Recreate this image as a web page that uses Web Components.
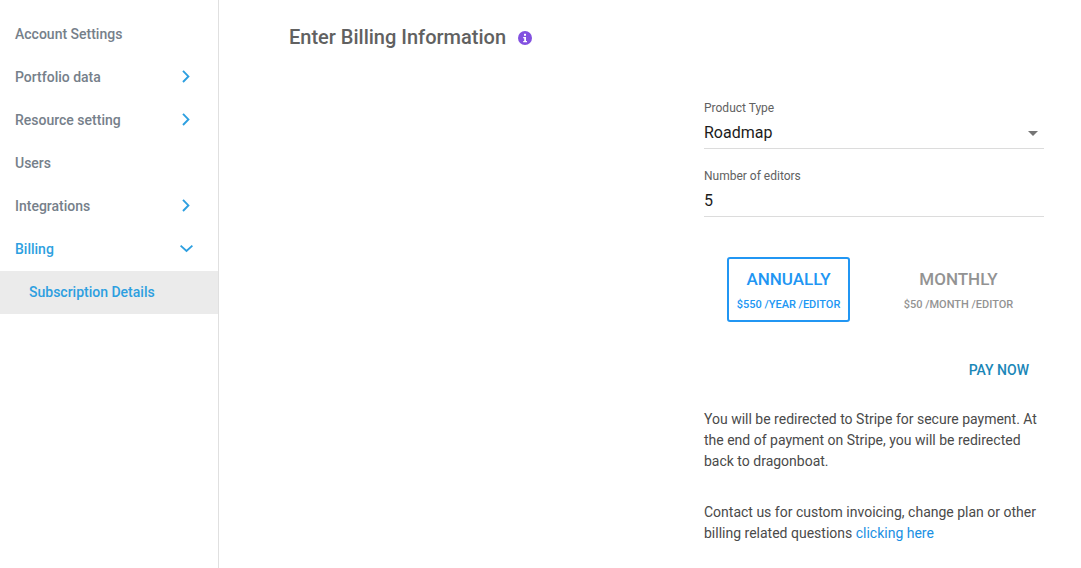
<!DOCTYPE html>
<html><head><meta charset="utf-8">
<style>
html,body{margin:0;padding:0;height:100%;overflow:hidden;background:#fff;font-family:Roboto,sans-serif}
#app{display:flex;height:568px}
</style></head><body>
<div id="app">
<side-nav>
  <nav-item>Account Settings</nav-item>
  <nav-item arrow="right">Portfolio data</nav-item>
  <nav-item arrow="right">Resource setting</nav-item>
  <nav-item>Users</nav-item>
  <nav-item arrow="right">Integrations</nav-item>
  <nav-item arrow="down" active>Billing</nav-item>
  <nav-item sub active>Subscription Details</nav-item>
</side-nav>
<billing-page></billing-page>
</div>
<template id="plan-t">
<style>
:host{display:flex;flex-direction:column;align-items:center;box-sizing:border-box;width:123px;height:65px;border:2px solid transparent;border-radius:3px;padding-top:9px;color:#939393}
:host([selected]){border-color:#2196f3;color:#2196f3}
.n{font-size:17px;font-weight:500;line-height:22px}
.p{font-size:11px;font-weight:500;line-height:14px;margin-top:8px;white-space:nowrap}
</style><div class="n"><slot name="name"></slot></div><div class="p"><slot name="price"></slot></div>
</template>
<script>
class SideNav extends HTMLElement{constructor(){super();this.attachShadow({mode:'open'}).innerHTML=`<style>:host{display:block;box-sizing:border-box;width:219px;flex:none;height:100%;border-right:1px solid #e0e0e0;padding-top:13px}</style><slot></slot>`}}
class NavItem extends HTMLElement{constructor(){super();const a=this.getAttribute('arrow');
const ic=a==='right'?'<path d="M3 .8 8.4 6.4 3 12"/>':a==='down'?'<path d="M.6 3.6 6.5 9 12.4 3.6"/>':'';
this.attachShadow({mode:'open'}).innerHTML=`<style>
:host{display:flex;align-items:center;height:43px;padding:0 25px 0 15px;font-size:14px;font-weight:500;color:#76808a;white-space:nowrap}
:host([active]){color:#2d9fe0}
:host([sub]){background:#ebebeb;padding-left:29px}
span{flex:1;margin-top:-2px}
svg{width:13px;height:13px;fill:none;stroke:#2d9fe0;stroke-width:1.9;margin-top:-2px}
</style><span><slot></slot></span>${ic?`<svg viewBox="0 0 13 13">${ic}</svg>`:''}`}}
class PlanOption extends HTMLElement{constructor(){super();this.attachShadow({mode:'open'}).append(document.getElementById('plan-t').content.cloneNode(true))}}
class FormField extends HTMLElement{constructor(){super();const sel=this.hasAttribute('select');
this.attachShadow({mode:'open'}).innerHTML=`<style>
:host{display:block;height:68px;box-sizing:border-box}
.l{font-size:12px;color:#616161;line-height:14px}
.v{display:flex;align-items:center;justify-content:space-between;box-sizing:border-box;height:33px;margin-top:1px;font-size:16px;color:#1c1c1c;border-bottom:1px solid #dcdcdc}
i{width:0;height:0;border:5.5px solid transparent;border-top:5.5px solid #757575;border-bottom:0;margin-right:6px;margin-top:2px}
</style><div class="l">${this.getAttribute('label')}</div><div class="v"><span><slot></slot></span>${sel?'<i></i>':''}</div>`}}
class BillingPage extends HTMLElement{constructor(){super();this.attachShadow({mode:'open'}).innerHTML=`<style>
:host{display:block;flex:1;padding:0 37px 0 70px;color:#4a4a4a}
h1{display:flex;align-items:center;margin:0;height:38px;padding-top:18px;font-size:20px;font-weight:500;color:#616161;line-height:38px}
h1 svg{width:14px;height:14px;margin:2px 0 0 12px}
.col{width:340px;margin:45px 0 0 415px}
.plans{display:flex;gap:47px;margin:20px 0 0 23px}
.pay{display:flex;justify-content:flex-end;margin:38px 15px 0 0;font-size:14px;font-weight:500;color:#1b87b8;line-height:20px}
p{margin:0;font-size:14px;line-height:21px;color:#4a4a4a}
p.a{margin-top:29px}p.b{margin-top:30px}
a{color:#1a8fe3;text-decoration:none}
</style>
<h1>Enter Billing Information<svg viewBox="0 0 14 14"><circle cx="7" cy="7" r="7" fill="#8250e0"/><rect x="6" y="2.8" width="2" height="2" fill="#fff"/><path d="M5.2 6h2.8v4h1v1.2H5.2V10h1V7.2h-1z" fill="#fff"/></svg></h1>
<div class="col">
<form-field label="Product Type" select>Roadmap</form-field>
<form-field label="Number of editors">5</form-field>
<div class="plans">
<plan-option selected><span slot="name">ANNUALLY</span><span slot="price">$550 /YEAR /EDITOR</span></plan-option>
<plan-option><span slot="name">MONTHLY</span><span slot="price">$50 /MONTH /EDITOR</span></plan-option>
</div>
<div class="pay">PAY NOW</div>
<p class="a">You will be redirected to Stripe for secure payment. At the end of payment on Stripe, you will be redirected back to dragonboat.</p>
<p class="b">Contact us for custom invoicing, change plan or other<br>billing related questions <a href="#">clicking here</a></p>
</div>`}}
customElements.define('plan-option',PlanOption);
customElements.define('form-field',FormField);
customElements.define('nav-item',NavItem);
customElements.define('side-nav',SideNav);
customElements.define('billing-page',BillingPage);
</script>
</body></html>
